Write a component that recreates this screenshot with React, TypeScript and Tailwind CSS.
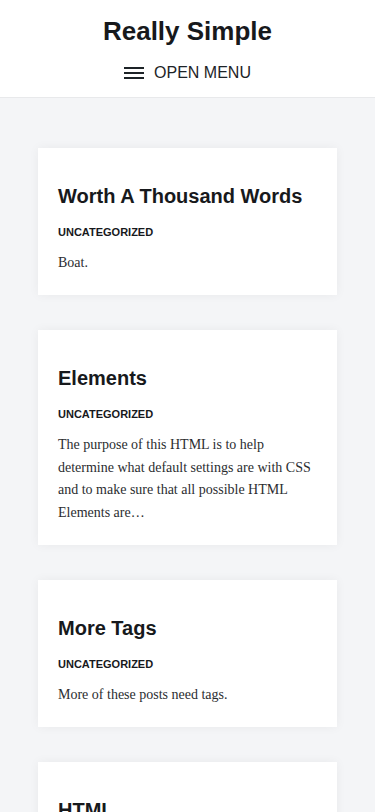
const posts = [
  {
    title: 'Worth A Thousand Words',
    category: 'Uncategorized',
    excerpt: 'Boat.',
  },
  {
    title: 'Elements',
    category: 'Uncategorized',
    excerpt:
      'The purpose of this HTML is to help determine what default settings are with CSS and to make sure that all possible HTML Elements are\u2026',
  },
  {
    title: 'More Tags',
    category: 'Uncategorized',
    excerpt: 'More of these posts need tags.',
  },
  {
    title: 'HTML',
    category: 'Uncategorized',
    excerpt: 'A short post about markup.',
  },
];

function MenuIcon() {
  return (
    <svg width="20" height="14" viewBox="0 0 20 14" fill="#1d2327">
      <rect x="0" y="1" width="20" height="2" />
      <rect x="0" y="6" width="20" height="2" />
      <rect x="0" y="11" width="20" height="2" />
    </svg>
  );
}

export default function App() {
  return (
    <div className="min-h-screen bg-[#f4f5f7] font-['Liberation_Sans',Arial,sans-serif] text-[#17191c]">
      <header className="bg-white border-b border-[#e8e9eb] pt-[15px] pb-[14px] flex flex-col items-center">
        <h1 className="text-[26px] leading-[32px] font-bold">Really Simple</h1>
        <button className="mt-[16px] flex items-center gap-[10px] text-[16px] leading-[20px] text-[#1d2327]">
          <MenuIcon />
          <span>OPEN MENU</span>
        </button>
      </header>

      <main className="px-[38px] pt-[50px] flex flex-col gap-[35px]">
        {posts.map((p) => (
          <article
            key={p.title}
            className="bg-white shadow-[0_0_10px_rgba(0,0,0,0.05)] px-[20px] pt-[36px] pb-[20px]"
          >
            <h2 className="text-[20px] leading-[24px] font-bold">{p.title}</h2>
            <div className="mt-[16px] text-[11px] leading-[16px] font-bold uppercase">
              {p.category}
            </div>
            <p className="mt-[12px] font-['Liberation_Serif','Times_New_Roman',serif] text-[14px] leading-[22.75px] text-[#2b2d30]">
              {p.excerpt}
            </p>
          </article>
        ))}
      </main>
    </div>
  );
}
